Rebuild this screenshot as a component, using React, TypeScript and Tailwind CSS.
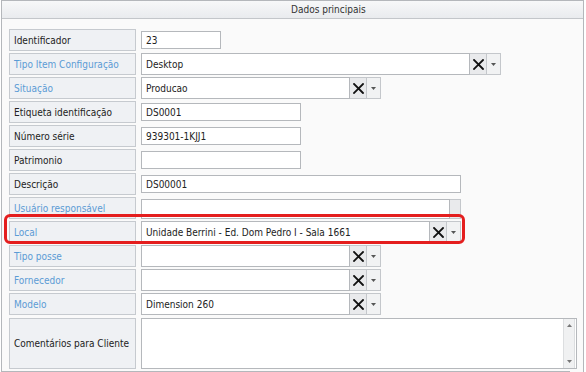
import React from 'react';

const LINK = 'text-[#5b9bd5]';

const XIcon = () => (
  <svg width="11" height="11" viewBox="0 0 11 11">
    <path d="M1 1 L10 10 M10 1 L1 10" stroke="#111" strokeWidth="1.8" strokeLinecap="square" />
  </svg>
);

const Caret = () => (
  <svg width="5" height="3" viewBox="0 0 5 3">
    <path d="M0 0 H5 L2.5 3 Z" fill="#555" />
  </svg>
);

const Label = ({ text, link, tall }: { text: string; link?: boolean; tall?: boolean }) => (
  <div
    className={`w-[127px] shrink-0 ${tall ? 'h-[51px]' : 'h-[22px]'} flex items-center pl-[4px] whitespace-nowrap border border-[#c6cacf] bg-[#eff1f4] ${link ? LINK : 'text-[#222]'}`}
  >
    {text}
  </div>
);

const TextBox = ({ value, width }: { value?: string; width: number }) => (
  <div
    className="h-[18px] flex items-center pl-[4px] border border-[#b5b8bc] bg-white text-[#222]"
    style={{ width }}
  >
    {value}
  </div>
);

const Combo = ({ value, width }: { value?: string; width: number }) => (
  <div className="h-[22px] flex" style={{ width }}>
    <div className="flex-1 flex items-center pl-[4px] border border-[#b5b8bc] bg-white text-[#222]">{value}</div>
    <div className="w-[17px] flex items-center justify-center border border-l-0 border-[#c4c7cb] bg-[#e9eaec]">
      <XIcon />
    </div>
    <div className="w-[14px] flex items-center justify-center border border-l-0 border-[#c4c7cb] bg-[#f1f2f3]">
      <Caret />
    </div>
  </div>
);

const Row = ({ children }: { children: React.ReactNode }) => (
  <div className="relative flex items-center gap-[5px] h-[22px]">{children}</div>
);

export default function App() {
  return (
    <div
      className="w-[586px] h-[372px] overflow-hidden bg-white text-[10px]"
      style={{ fontFamily: '"DejaVu Sans Condensed", "DejaVu Sans", Verdana, sans-serif' }}
    >
      <div className="ml-[1px] w-[583px] h-[380px] border border-[#b4b7bb] bg-[#fafafa]">
        <div className="h-[18px] flex items-center pl-[289px] border-b border-[#c3c6ca] bg-gradient-to-b from-[#f7f8f9] to-[#e9ebee] text-[#333]">
          Dados principais
        </div>
        <div className="pl-[7px] pt-[10px] flex flex-col gap-[2px]">
          <Row>
            <Label text="Identificador" />
            <TextBox value="23" width={80} />
          </Row>
          <Row>
            <Label text="Tipo Item Configuração" link />
            <Combo value="Desktop" width={360} />
          </Row>
          <Row>
            <Label text="Situação" link />
            <Combo value="Producao" width={240} />
          </Row>
          <Row>
            <Label text="Etiqueta identificação" />
            <TextBox value="DS0001" width={160} />
          </Row>
          <Row>
            <Label text="Número série" />
            <TextBox value="939301-1KJJ1" width={160} />
          </Row>
          <Row>
            <Label text="Patrimonio" />
            <TextBox width={160} />
          </Row>
          <Row>
            <Label text="Descrição" />
            <TextBox value="DS00001" width={320} />
          </Row>
          <Row>
            <Label text="Usuário responsável" link />
            <div className="h-[20px] w-[320px] flex self-end">
              <div className="flex-1 border border-[#b5b8bc] bg-white" />
              <div className="w-[11px] border border-l-0 border-[#c4c7cb] bg-[#e9eaec]" />
            </div>
          </Row>
          <Row>
            <Label text="Local" link />
            <Combo value="Unidade Berrini - Ed. Dom Pedro I - Sala 1661" width={320} />
            <div className="absolute left-[-5px] top-[-7px] bottom-[-1px] w-[461px] border-[3px] border-[#e41e1e] rounded-[6px] pointer-events-none" />
          </Row>
          <Row>
            <Label text="Tipo posse" link />
            <Combo width={240} />
          </Row>
          <Row>
            <Label text="Fornecedor" link />
            <Combo width={240} />
          </Row>
          <Row>
            <Label text="Modelo" link />
            <Combo value="Dimension 260" width={240} />
          </Row>
          <div className="flex gap-[5px] mt-[1px]">
            <Label text="Comentários para Cliente" tall />
            <div className="w-[436px] h-[51px] flex border border-[#b5b8bc] bg-white">
              <div className="flex-1" />
              <div className="w-[12px] mr-[1px] flex flex-col justify-between items-center py-[5px] border-x border-[#dcdee0] bg-[#f0f1f2]">
                <svg width="5" height="3" viewBox="0 0 5 3"><path d="M0 3 H5 L2.5 0 Z" fill="#777" /></svg>
                <svg width="5" height="3" viewBox="0 0 5 3"><path d="M0 0 H5 L2.5 3 Z" fill="#777" /></svg>
              </div>
            </div>
          </div>
          <div className="h-[1px] w-[568px] bg-[#b4b7bb] -ml-[7px]" />
        </div>
      </div>
    </div>
  );
}
